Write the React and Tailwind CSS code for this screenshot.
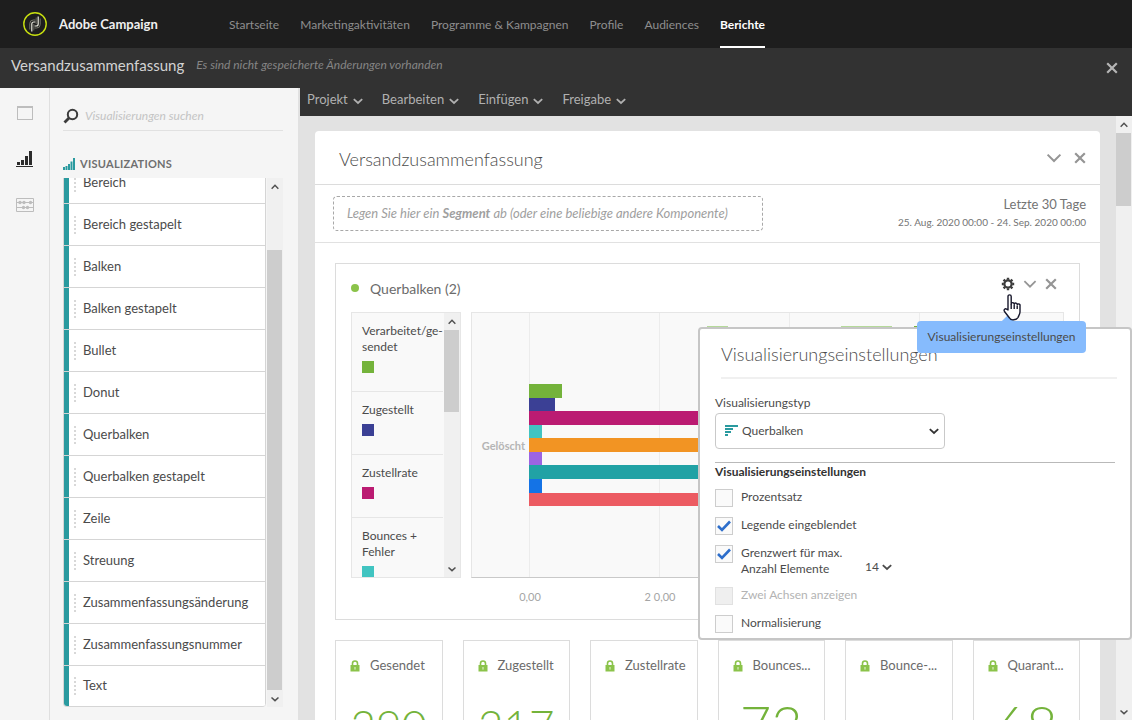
import React, { useState } from 'react';

const navItems = ['Startseite', 'Marketingaktivitäten', 'Programme & Kampagnen', 'Profile', 'Audiences', 'Berichte'];

const menus = ['Projekt', 'Bearbeiten', 'Einfügen', 'Freigabe'];

const visualizations = [
  'Bereich',
  'Bereich gestapelt',
  'Balken',
  'Balken gestapelt',
  'Bullet',
  'Donut',
  'Querbalken',
  'Querbalken gestapelt',
  'Zeile',
  'Streuung',
  'Zusammenfassungsänderung',
  'Zusammenfassungsnummer',
  'Text',
];

const legend = [
  { label: 'Verarbeitet/ge-sendet', color: '#74b33b' },
  { label: 'Zugestellt', color: '#3b4095' },
  { label: 'Zustellrate', color: '#bb1b72' },
  { label: 'Bounces + Fehler', color: '#41c4c1' },
];

const bars = [
  { value: 5, color: '#74b33b' },
  { value: 4, color: '#3b4095' },
  { value: 60, color: '#bb1b72' },
  { value: 2, color: '#41c4c1' },
  { value: 70, color: '#f29423' },
  { value: 2, color: '#9c64e2' },
  { value: 65, color: '#21a2a5' },
  { value: 2, color: '#1473e6' },
  { value: 80, color: '#ec5b62' },
];

const gridLines = [
  { id: 0, tick: '0,00' },
  { id: 20, tick: '2 0,00' },
  { id: 40 },
  { id: 60 },
];

const summaries = [
  { label: 'Gesendet', value: '290' },
  { label: 'Zugestellt', value: '217' },
  { label: 'Zustellrate', value: '' },
  { label: 'Bounces...', value: '73' },
  { label: 'Bounce-...', value: '' },
  { label: 'Quarant...', value: '68' },
];

const Chevron = ({ className, up, thin }) => (
  <svg viewBox="0 0 12 12" className={className} fill="none" stroke="currentColor" strokeWidth={thin ? 1.5 : 1.8}>
    <path d={up ? 'M2 8l4-4 4 4' : thin ? 'M1.2 3.5L6 8.3l4.8-4.8' : 'M1.8 4.2L6 8l4.2-3.8'} />
  </svg>
);

const Cross = ({ className }) => (
  <svg viewBox="0 0 12 12" className={className} fill="none" stroke="currentColor" strokeWidth="2.2">
    <path d="M1.2 1.2l9.6 9.6M10.8 1.2l-9.6 9.6" />
  </svg>
);

const Gear = ({ className }) => (
  <svg viewBox="0 0 14 14" className={className} fill="none" stroke="currentColor">
    <circle cx="7" cy="7" r="3.6" strokeWidth="2.2" />
    <path
      d="M7 .8v2M7 11.2v2M.8 7h2M11.2 7h2M2.6 2.6l1.5 1.5M9.9 9.9l1.5 1.5M2.6 11.4l1.5-1.5M9.9 4.1l1.5-1.5"
      strokeWidth="2.4"
    />
  </svg>
);

const Lock = ({ className }) => (
  <svg viewBox="0 0 10 12" className={className}>
    <path d="M2.5 6V3.5a2.5 2.5 0 0 1 5 0V6" fill="none" stroke="#8bc34a" strokeWidth="1.6" />
    <rect x="0.5" y="5" width="9" height="6.5" fill="#8bc34a" />
    <rect x="4.4" y="7" width="1.2" height="2.6" fill="#d7edbd" />
  </svg>
);

const Logo = () => (
  <svg viewBox="0 0 24 24" className="size-6" fill="none">
    <circle cx="12" cy="12" r="11.2" stroke="#c8e010" strokeWidth="1.4" />
    <path d="M6.8 17.5v-6A3.5 3.5 0 0 1 10.3 8h2.2" stroke="#73756a" />
    <path d="M8.8 19.5V12a2 2 0 0 1 2-2h1.7" stroke="#e8e8dc" strokeWidth="1.2" />
    <path d="M17.2 6.5v6a3.5 3.5 0 0 1-3.5 3.5h-2.2" stroke="#73756a" />
    <path d="M15.2 4.5V12a2 2 0 0 1-2 2h-1.7" stroke="#e8e8dc" strokeWidth="1.2" />
    <path d="M10.8 12v6.5M13.2 12V5.5" stroke="#73756a" strokeWidth=".8" />
  </svg>
);

const Cursor = ({ className }) => (
  <svg viewBox="0 0 18 28" className={className} fill="#fff" stroke="#17172b" strokeWidth="1.4" strokeLinejoin="round">
    <path d="M5 16V2.5a1.6 1.6 0 0 1 3.2 0V10a1.5 1.5 0 0 1 3 .3 1.5 1.5 0 0 1 3 .7 1.4 1.4 0 0 1 2.8.7V18c0 2-1.5 4-2 5.5C13.5 26 8 27 6.5 24L1.5 17.5c-1.2-2 .8-3.5 2.2-2.3z" />
    <path d="M8.2 10v5M11.2 11v4M14.2 12v3" fill="none" />
  </svg>
);

const Scrollbar = ({ track, thumb }) => (
  <div className="flex w-4 shrink-0 flex-col bg-[#f0f0f0] text-[#505050]" aria-hidden="true">
    <div className="flex h-[17px] shrink-0 items-center justify-center">
      <Chevron up className="size-2.5" />
    </div>
    <div className={`shrink-0 ${track}`} />
    <div className={`mr-px bg-[#cdcdcd] ${thumb}`} />
    <div className="mt-auto flex h-[17px] shrink-0 items-center justify-center">
      <Chevron className="size-2.5" />
    </div>
  </div>
);

const Sidebar = () => (
  <aside className="flex w-[300px] shrink-0 border-r-2 border-[#e1e1e1] bg-[#f5f5f5]">
    <div className="flex w-[50px] shrink-0 flex-col items-center gap-7 border-r border-[#dfdfdf] pt-4">
      <button aria-label="Bedienfelder" className="text-[#bdbdbd]">
        <svg viewBox="0 0 18 18" className="size-[18px]" fill="none" stroke="currentColor">
          <rect x="1.5" y="2.5" width="15" height="13" />
          <path d="M1 3h16" strokeWidth="2" />
        </svg>
      </button>
      <button aria-label="Visualisierungen" className="text-[#2c2c2c]">
        <svg viewBox="0 0 18 18" className="size-[18px]" fill="currentColor">
          <path d="M1 12h3v3H1zM5 10h3v5H5zM9 6h3v9H9zM13 1h3v14h-3zM0 16h17v1H0z" />
        </svg>
      </button>
      <button aria-label="Komponenten" className="text-[#bdbdbd]">
        <svg viewBox="0 0 18 18" className="size-[18px]" fill="currentColor">
          <path d="M.5 2.5h17v13H.5zM0 6.5h18M0 11.5h18" fill="none" stroke="currentColor" />
          <circle cx="4" cy="6.5" r="1.7" />
          <circle cx="8" cy="6.5" r="1.7" />
          <circle cx="14.5" cy="6.5" r="1.7" />
          <circle cx="7.5" cy="11.5" r="1.7" />
          <circle cx="11.5" cy="11.5" r="1.7" />
        </svg>
      </button>
    </div>
    <div className="flex min-w-0 flex-1 flex-col pt-3 pr-[15px] pb-[13px] pl-[13px]">
      <div className="flex h-[31px] shrink-0 items-center gap-1.5 border-b border-[#e1e1e1] pt-0.5">
        <svg viewBox="0 0 16 16" className="size-4 shrink-0" fill="none" stroke="#3c3c3c">
          <circle cx="9.5" cy="6.5" r="4.7" strokeWidth="2" />
          <path d="M6 10l-4.5 4.5" strokeWidth="2.8" />
        </svg>
        <input
          type="text"
          aria-label="Visualisierungen suchen"
          placeholder="Visualisierungen suchen"
          className="min-w-0 flex-1 bg-transparent text-[12px] italic outline-none placeholder:text-[#c4c4c4]"
        />
      </div>
      <h2 className="mt-5 flex h-[26px] shrink-0 items-center gap-[5px] text-[11px] font-bold tracking-wide text-[#6f6f6f]">
        <svg viewBox="0 0 12 12" className="size-3" fill="#2a9a9f">
          <path d="M0 9h2v3H0zM2.5 8h2v4h-2zM5 6h2v6H5zM7.5 3.5h2V12h-2zM10 0h2v12h-2z" />
        </svg>
        VISUALIZATIONS
      </h2>
      <div className="flex min-h-0 flex-1 justify-between pt-px">
        <ul className="flex w-[203px] flex-col justify-end overflow-hidden rounded-b-sm border-b border-l border-[#d5d5d5]">
          {visualizations.map((name) => (
            <li
              key={name}
              className="flex h-[42px] shrink-0 cursor-grab items-center border-t border-r border-[#d5d5d5] bg-white text-[13px] text-[#4b4b4b] last:h-[41px]"
            >
              <span className="h-full w-[5px] bg-[#2a9a9f]" />
              <span className="mx-[5px] h-[18px] border-l-2 border-dotted border-[#d8d8d8]" />
              <span className="pl-0.5">{name}</span>
            </li>
          ))}
        </ul>
        <Scrollbar track="h-[55px]" thumb="flex-1" />
      </div>
    </div>
  </aside>
);

const ChartCard = () => (
  <section className="border border-[#dcdcdc] bg-white px-[15px] pb-[41px]">
    <div className="flex h-12 items-center">
      <span className="size-2 rounded-full bg-[#8bc34a]" />
      <h2 className="ml-[11px] flex-1 text-[14px] text-[#6b6b6b]">Querbalken (2)</h2>
      <div className="mb-2 flex items-center gap-2 pr-[7px] text-[#959595]">
        <button aria-label="Visualisierungseinstellungen" className="text-[#3c3c3c]">
          <Gear className="size-3.5" />
        </button>
        <button aria-label="Ausblenden">
          <Chevron thin className="size-3.5" />
        </button>
        <button aria-label="Entfernen">
          <Cross className="size-3" />
        </button>
      </div>
    </div>
    <div className="flex h-[266px] gap-2.5">
      <div className="flex w-[110px] shrink-0 overflow-hidden border border-[#e6e6e6] bg-[#f9f9f9]">
        <ul className="min-w-0 flex-1">
          {legend.map((item) => (
            <li
              key={item.label}
              className="mr-px border-b border-[#e6e6e6] py-2.5 pl-2.5 text-[12px] leading-4 text-[#4b4b4b] last:border-0"
            >
              <p className="w-[84px]">{item.label}</p>
              <span className="mt-1.5 mb-2 block size-3" style={{ backgroundColor: item.color }} />
            </li>
          ))}
        </ul>
        <Scrollbar track="h-0" thumb="h-[82px]" />
      </div>
      <div className="relative flex min-w-0 flex-1 items-center border border-[#e6e6e6] border-b-[#c9c9c9] bg-[#f9f9f9]">
        <span className="w-[57px] shrink-0 pt-0.5 pr-1 text-right text-[11px] font-bold text-[#b5b5b5]">Gelöscht</span>
        <div className="relative flex h-full min-w-0 flex-1 items-center">
          <div className="absolute inset-0 flex">
            {gridLines.map((line) => (
              <div key={line.id} className="relative w-[130px] shrink-0 border-l border-[#ececec]">
                {line.tick && (
                  <span className="absolute top-full -left-5 mt-3 w-10 text-center text-[11px] text-[#a5a5a5]">
                    {line.tick}
                  </span>
                )}
              </div>
            ))}
          </div>
          <div className="absolute inset-x-0 top-[13px] flex h-0.5 pl-[178px]" aria-hidden="true">
            <span className="w-[21px] bg-[#b5d99a]" />
            <span className="ml-[113px] w-[51px] bg-[#b5d99a]" />
            <span className="ml-[22px] w-10 bg-[#74b33b]" />
          </div>
          <div className="relative flex h-[122px] flex-1 flex-col">
            {bars.map((bar) => (
              <div key={bar.color} className="flex-1" style={{ width: `${bar.value * 6.5}px`, backgroundColor: bar.color }} />
            ))}
          </div>
        </div>
      </div>
    </div>
  </section>
);

const SummaryCard = ({ label, value }) => (
  <section className="h-[140px] overflow-hidden border border-[#dcdcdc] bg-white">
    <div className="flex h-[50px] items-center gap-2.5 pl-3.5">
      <Lock className="h-3 w-2.5" />
      <h3 className="text-[13px] text-[#6b6b6b]">{label}</h3>
    </div>
    <p
      className={`pt-2 text-center leading-[52px] font-light text-[#74b33b] ${value.length > 2 ? 'text-[44px]' : 'text-[54px]'}`}
    >
      {value}
    </p>
  </section>
);

const Option = ({ label, checked, disabled, onChange, wrap }) => (
  <label className={`flex gap-2 text-[12px] leading-4 ${disabled ? 'text-[#b3b3b3]' : 'text-[#4b4b4b]'}`}>
    <span className="relative size-[18px] shrink-0">
      <input
        type="checkbox"
        checked={checked}
        disabled={disabled}
        onChange={onChange}
        className="peer block size-[18px] appearance-none border border-[#cdcdcd] bg-[#fafafa] disabled:border-[#e1e1e1] disabled:bg-[#efefef]"
      />
      <svg
        viewBox="0 0 18 18"
        className="pointer-events-none absolute inset-0 hidden size-[18px] peer-checked:block"
        fill="none"
        stroke="#2d6ecb"
        strokeWidth="2.6"
      >
        <path d="M3 9l4 4 8-8.5" />
      </svg>
    </span>
    <span className={wrap ? 'w-[118px]' : 'whitespace-nowrap'}>{label}</span>
  </label>
);

const SettingsPopover = () => {
  const [options, setOptions] = useState({ percent: false, legend: true, limit: true, normalize: false });

  const toggle = (key) => () => setOptions({ ...options, [key]: !options[key] });

  return (
    <div className="absolute top-[239px] right-0 w-[434px] rounded-sm border-2 border-[#c6c6c6] bg-white px-[15px] pb-[5px]">
      <h2 className="-mr-0.5 ml-1.5 border-b-2 border-[#f0f0f0] pt-2.5 pb-2 text-[18px] leading-[30px] font-light text-[#4b4b4b]">
        Visualisierungseinstellungen
      </h2>
      <label htmlFor="type" className="mt-4 block text-[12px] leading-4 text-[#4b4b4b]">
        Visualisierungstyp
      </label>
      <div className="relative mt-0.5 w-[230px]">
        <svg viewBox="0 0 13 12" className="pointer-events-none absolute top-3 left-2.5 h-3 w-[13px]" fill="#2a9a9f">
          <path d="M0 0h13v2H0zM0 3h8v2H0zM0 6h6v2H0zM0 9h3v2H0z" />
        </svg>
        <select
          id="type"
          className="h-9 w-full appearance-none rounded border border-[#c9c9c9] bg-transparent pl-[26px] text-[12px] text-[#4b4b4b]"
        >
          <option>Querbalken</option>
          <option>Balken</option>
        </select>
        <Chevron className="pointer-events-none absolute top-3 right-[5px] size-3 text-[#323232]" />
      </div>
      <fieldset className="mt-[13px] border-t border-[#b9b9b9]">
        <h3 className="text-[12px] leading-[18px] font-bold text-[#323232]">Visualisierungseinstellungen</h3>
        <div className="mt-2 flex flex-col gap-2.5">
          <Option label="Prozentsatz" checked={options.percent} onChange={toggle('percent')} />
          <Option label="Legende eingeblendet" checked={options.legend} onChange={toggle('legend')} />
          <div className="flex items-end gap-1.5">
            <Option wrap label="Grenzwert für max. Anzahl Elemente" checked={options.limit} onChange={toggle('limit')} />
            <div className="relative flex">
              <select
                aria-label="Maximale Anzahl Elemente"
                className="w-8 appearance-none bg-transparent text-[12px] leading-5 text-[#4b4b4b]"
              >
                <option>14</option>
                <option>20</option>
              </select>
              <Chevron className="pointer-events-none absolute top-1 right-1 size-3 text-[#4b4b4b]" />
            </div>
          </div>
          <Option label="Zwei Achsen anzeigen" checked={false} disabled onChange={() => {}} />
          <Option label="Normalisierung" checked={options.normalize} onChange={toggle('normalize')} />
        </div>
      </fieldset>
    </div>
  );
};

const App = () => {
  return (
    <div className="flex h-screen flex-col overflow-hidden bg-[#f5f5f5] font-['Lato',sans-serif]">
      <header className="flex h-12 shrink-0 items-center bg-[#1e1e1e] pl-[23px]">
        <Logo />
        <span className="ml-3 w-[170px] pt-0.5 text-[13px] font-bold text-[#f0f0f0]">Adobe Campaign</span>
        <nav className="flex h-full gap-[21px] text-[12px] text-[#8e8e8e]">
          {navItems.map((item) => (
            <a
              key={item}
              href="#"
              className={`flex items-center border-b-2 pt-1 ${item === 'Berichte' ? 'border-white font-bold text-white' : 'border-transparent'}`}
            >
              {item}
            </a>
          ))}
        </nav>
      </header>

      <div className="flex h-10 shrink-0 items-center bg-[#323232] px-[11px]">
        <h1 className="pb-1.5 text-[15px] text-[#d2d2d2]">Versandzusammenfassung</h1>
        <p className="ml-3 flex-1 pb-1.5 text-[12px] text-[#858585] italic">
          Es sind nicht gespeicherte Änderungen vorhanden
        </p>
        <button aria-label="Schließen" className="mr-[3px] text-[#b5b5b5]">
          <Cross className="size-3" />
        </button>
      </div>

      <div className="flex min-h-0 flex-1">
        <Sidebar />

        <main className="relative flex min-w-0 flex-1 flex-col">
          <div className="flex h-7 shrink-0 gap-[18px] bg-[#323232] pl-[7px] text-[13px] text-[#b0b0b0]">
            {menus.map((menu) => (
              <button key={menu} className="flex items-center gap-1 pb-1">
                {menu}
                <Chevron className="mt-0.5 size-3" />
              </button>
            ))}
          </div>

          <div className="flex min-h-0 flex-1">
            <div className="min-w-0 flex-1 overflow-hidden bg-[#e2e2e2] pt-[15px] pr-4 pl-[15px]">
              <div className="rounded-t bg-white">
                <div className="flex h-[54px] items-center border-b border-[#dcdcdc] pr-3.5 pl-6">
                  <h2 className="flex-1 pt-1 text-[18px] font-light text-[#4b4b4b]">Versandzusammenfassung</h2>
                  <div className="flex items-center gap-3 text-[#959595]">
                    <button aria-label="Ausblenden">
                      <Chevron thin className="size-4" />
                    </button>
                    <button aria-label="Entfernen">
                      <Cross className="size-3" />
                    </button>
                  </div>
                </div>
                <div className="flex h-[58px] items-center justify-between border-b border-[#e1e1e1] pr-3.5 pl-[18px]">
                  <p className="flex h-[35px] w-[430px] items-center rounded border border-dashed border-[#a8a8a8] px-[13px] text-[13px] whitespace-pre text-[#a0a0a0] italic">
                    Legen Sie hier ein <b>Segment</b> ab (oder eine beliebige andere Komponente)
                  </p>
                  <div className="pb-1 text-right text-[#747474]">
                    <p className="text-[13px] leading-5">Letzte 30 Tage</p>
                    <p className="text-[10px] leading-4">25. Aug. 2020 00:00 - 24. Sep. 2020 00:00</p>
                  </div>
                </div>
                <div className="px-5 pt-5">
                  <ChartCard />
                  <div className="mt-5 grid grid-cols-6 gap-5">
                    {summaries.map((item) => (
                      <SummaryCard key={item.label} label={item.label} value={item.value} />
                    ))}
                  </div>
                </div>
              </div>
            </div>
            <Scrollbar track="h-0" thumb="h-[73px]" />
          </div>

          <SettingsPopover />
          <div
            role="tooltip"
            className="absolute top-[233px] right-[46px] flex h-8 w-[169px] items-center justify-center rounded-sm bg-[#86bbfd] text-[12px] text-[#4b4b4b]"
          >
            Visualisierungseinstellungen
            <span className="absolute -top-1 left-[86px] size-2.5 rotate-45 bg-[#86bbfd]" />
          </div>
          <Cursor className="absolute top-[206px] right-[111px] h-7 w-[18px]" />
        </main>
      </div>
    </div>
  );
};

export default App;
